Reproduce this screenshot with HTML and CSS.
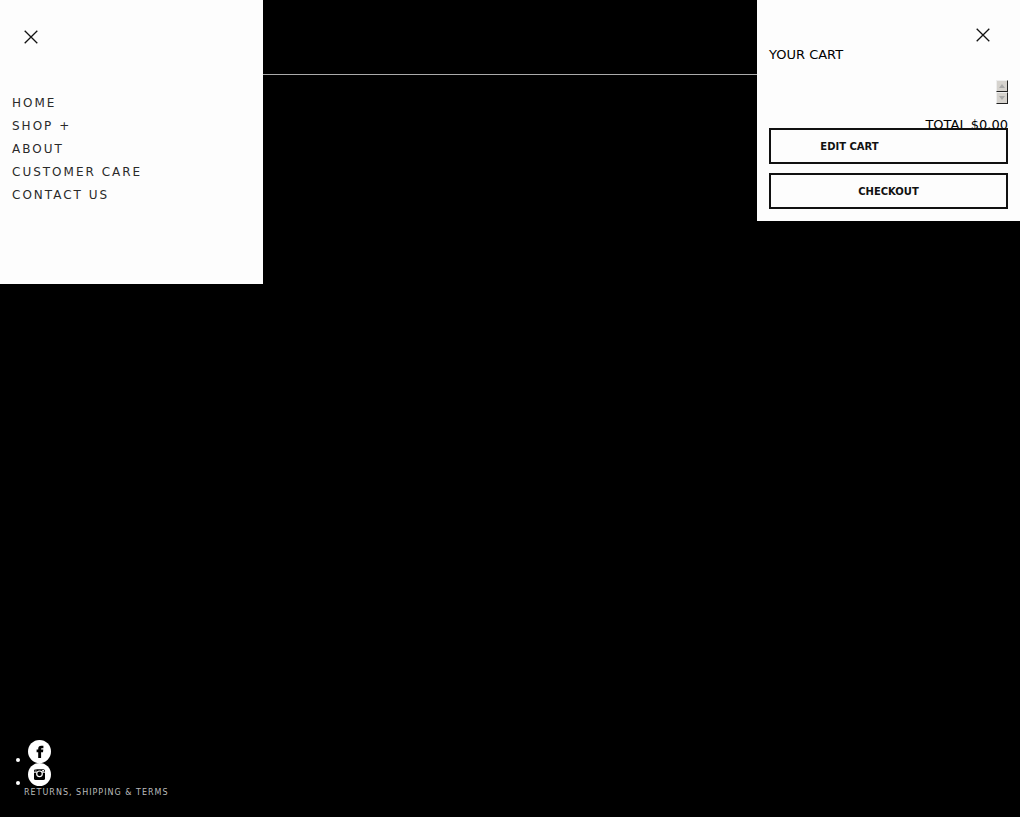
FILE: index.html
```html
<!DOCTYPE html>
<html lang="en">
<head>
<meta charset="utf-8">
<meta name="viewport" content="width=device-width, initial-scale=1">
<title>Shop</title>
<link rel="stylesheet" href="styles.css">
</head>
<body>
<header class="site-header"></header>
<aside class="drawer drawer-left">
  <button class="close" type="button" aria-label="Close menu">
    <svg width="14" height="14" viewBox="0 0 14 14"><path d="M.7.7l12.6 12.6M13.3.7L.7 13.3"/></svg>
  </button>
  <nav class="menu">
    <a href="#">HOME</a>
    <a href="#">SHOP +</a>
    <a href="#">ABOUT</a>
    <a href="#">CUSTOMER CARE</a>
    <a href="#">CONTACT US</a>
  </nav>
</aside>
<aside class="drawer drawer-right">
  <button class="close" type="button" aria-label="Close cart">
    <svg width="14" height="14" viewBox="0 0 14 14"><path d="M.7.7l12.6 12.6M13.3.7L.7 13.3"/></svg>
  </button>
  <h2 class="cart-title">YOUR CART</h2>
  <div class="scroller">
    <button class="step" type="button" aria-label="Scroll up"><svg width="6" height="4" viewBox="0 0 6 4"><path d="M0 4l3-4 3 4z"/></svg></button>
    <button class="step" type="button" aria-label="Scroll down"><svg width="6" height="4" viewBox="0 0 6 4"><path d="M0 0l3 4 3-4z"/></svg></button>
  </div>
  <p class="total">TOTAL $0.00</p>
  <div class="actions">
    <a class="action action-edit" href="#">EDIT CART</a>
    <button class="action" type="button">CHECKOUT</button>
  </div>
</aside>
<footer class="site-footer">
  <ul class="social">
    <li><a href="#" aria-label="Facebook"><svg width="23" height="23" viewBox="0 0 23 23"><circle cx="11.5" cy="11.5" r="11.5" fill="#fff"/><path d="M10.2 18v-5.7H8.6V9.6h1.6V8.7c0-2 1-3 3-3h2.2v2.6h-1.3c-.8 0-1 .3-1 .9v.4h2.2l-.3 2.7h-1.9V18z"/></svg></a></li>
    <li><a href="#" aria-label="Instagram"><svg width="23" height="23" viewBox="0 0 23 23"><circle cx="11.5" cy="11.5" r="11.5" fill="#fff"/><rect x="6" y="6.2" width="11" height="10.8" rx="1.6"/><path d="M6 9.2h11" stroke="#fff"/><path d="M7.9 6v2.8" stroke="#fff" stroke-width=".5"/><path d="M14.2 7.1h1.8v1.5h-1.8z" fill="#fff"/><circle cx="11.5" cy="10.8" r="2.8" stroke="#fff" stroke-width="1.2"/></svg></a></li>
  </ul>
  <a class="terms" href="#">RETURNS, SHIPPING &amp; TERMS</a>
</footer>
</body>
</html>
```
FILE: styles.css
```css
* { box-sizing: border-box; }
body {
  margin: 0;
  min-height: 100vh;
  display: flex;
  flex-direction: column;
  justify-content: space-between;
  background: #000;
  font-family: "DejaVu Sans", sans-serif;
}
a { color: inherit; text-decoration: none; }
button { font: inherit; color: inherit; cursor: pointer; }
.site-header { height: 75px; border-bottom: 1px solid #aaa; }
.drawer {
  position: absolute;
  top: 0;
  width: 263px;
  background: #fdfdfd;
  color: #111;
  display: flex;
  flex-direction: column;
}
.drawer-left { left: 0; padding: 30px 12px 77px; }
.drawer-right { right: 0; padding: 28px 12px 12px; }
.close {
  display: block;
  width: 14px;
  height: 14px;
  margin: 0 12px;
  padding: 0;
  border: 0;
  background: none;
}
.close svg { display: block; fill: none; stroke: #111; stroke-width: 1.3; }
.drawer-right .close { align-self: flex-end; margin: 0 18px; }
.menu {
  display: flex;
  flex-direction: column;
  margin-top: 48px;
  color: #2a2a2a;
  font-size: 12px;
  line-height: 23px;
  letter-spacing: 2px;
}
.cart-title {
  margin: 4px 0 0;
  font-size: 13px;
  line-height: 18px;
  font-weight: 400;
  color: #000;
}
.scroller {
  display: flex;
  flex-direction: column;
  align-items: flex-end;
  margin-top: 16px;
}
.step {
  display: flex;
  align-items: center;
  justify-content: center;
  width: 12px;
  height: 12px;
  padding: 0;
  border: 1px solid;
  border-color: #eee #222 #222 #eee;
  background: #d6d3ce;
}
.step svg { fill: #aaa; }
.total {
  margin: 12px 0 0;
  text-align: right;
  font-size: 13px;
  line-height: 18px;
  color: #000;
}
.actions {
  display: flex;
  flex-direction: column;
  gap: 9px;
  margin-top: -6px;
}
.action {
  height: 36px;
  padding: 0;
  border: 2px solid #111;
  background: #fdfdfd;
  font-size: 10px;
  line-height: 33px;
  font-weight: 700;
  text-align: center;
}
.action-edit { padding-right: 78px; }
.site-footer { padding: 0 24px 17px; color: #bbb; }
.social {
  margin: 0;
  padding: 0 0 0 6px;
  color: #fff;
  font-size: 12px;
}
.social li { height: 23px; line-height: 8px; }
.social a { margin-left: -2px; }
.terms {
  display: block;
  width: 144px;
  overflow: hidden;
  white-space: nowrap;
  font-size: 8px;
  line-height: 14px;
  letter-spacing: 1px;
}
```
